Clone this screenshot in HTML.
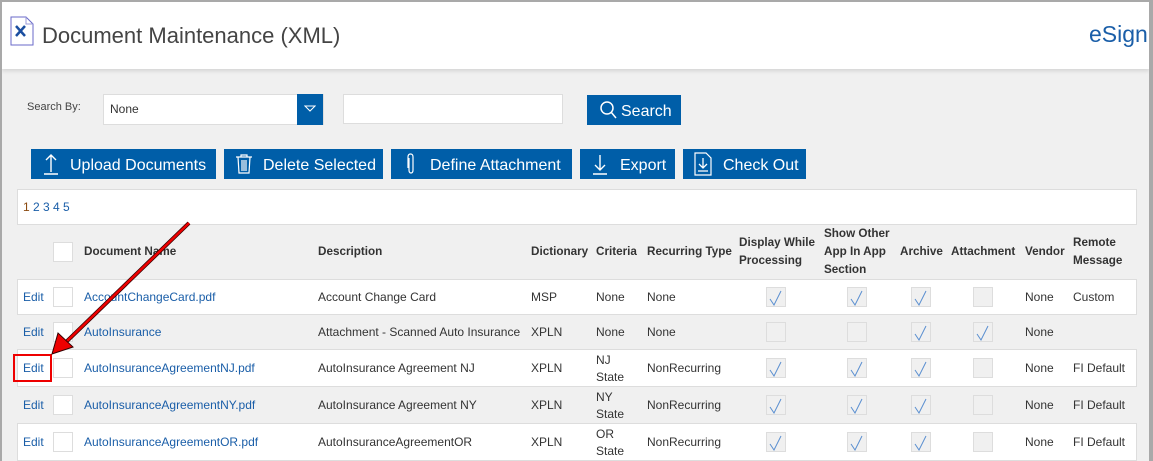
<!DOCTYPE html>
<html><head><meta charset="utf-8"><style>
*{margin:0;padding:0;box-sizing:border-box}
body{width:1153px;height:461px;overflow:hidden;background:#a9a9a9;font-family:"Liberation Sans",sans-serif;position:relative}
#main{position:absolute;left:2px;top:2px;width:1147px;height:459px;background:#f0f0f0;overflow:hidden}
#hdr{position:absolute;left:0;top:0;width:1147px;height:67px;background:#fff;box-shadow:0 2px 4px rgba(0,0,0,.12)}
.a{position:absolute;white-space:nowrap}
.btn{position:absolute;background:#005ea8;color:#fff;font-size:16px;height:30px;line-height:34px}
.btn svg{position:absolute}
.t{font-size:12px;color:#333}
.h{font-size:11.7px;font-weight:bold;color:#333;line-height:18px}
.l{color:#1a5ea8}
.cb{position:absolute;width:20px;height:20px;background:#fff;border:1px solid #ddd}
.row{position:absolute;left:15px;width:1120px;border-top:1px solid #ddd}
</style></head><body>
<div id="main">
<div id="hdr">
<svg class="a" style="left:8px;top:14px" width="24" height="30" viewBox="0 0 24 30"><path d="M1 1H16L23 8V29H1Z" fill="#fff" stroke="#6a6ac8" stroke-width="1"/><path d="M16 1V8H23" fill="none" stroke="#9a9ad8"/><path d="M6 10L15 20M15 10L6 20" stroke="#1a4ea0" stroke-width="2.5"/></svg>
<div class="a" style="left:40px;top:21px;font-size:22px;color:#444">Document Maintenance (XML)</div>
<div class="a" style="left:1087px;top:19px;font-size:23px;color:#1a5ea8">eSign</div>
</div>
<div class="a" style="left:25px;top:99px;font-size:11px;color:#444">Search By:</div>
<div class="a" style="left:101px;top:92px;width:221px;height:31px;background:#fff;border:1px solid #ddd"></div>
<div class="a" style="left:108px;top:100px;font-size:12px;color:#333">None</div>
<div class="a" style="left:295px;top:92px;width:26px;height:31px;background:#005ea8"></div>
<svg class="a" style="left:302px;top:103px" width="12" height="8"><path d="M1 1H11L6 6Z" fill="none" stroke="#fff"/></svg>
<div class="a" style="left:341px;top:92px;width:220px;height:30px;background:#fff;border:1px solid #ddd"></div>
<div class="btn" style="left:585px;top:93px;width:94px"><svg style="left:12px;top:5px" width="18" height="20"><circle cx="8" cy="8" r="6" fill="none" stroke="#fff" stroke-width="1.5"/><path d="M12 12L17 18" stroke="#fff" stroke-width="1.5"/></svg><span style="position:absolute;left:34px">Search</span></div>
<div class="btn" style="left:29px;top:147px;width:185px"><svg style="left:12px;top:4px" width="16" height="22"><path d="M8 2V19M3 7L8 2L13 7M1 21H15" fill="none" stroke="#fff" stroke-width="1.4"/></svg><span style="position:absolute;left:39px">Upload Documents</span></div>
<div class="btn" style="left:222px;top:147px;width:159px"><svg style="left:10px;top:4px" width="20" height="22"><path d="M2 4H18M7 4V2H13V4M4 4L5 20H15L16 4M8 7V18M10 7V18M12 7V18" fill="none" stroke="#fff" stroke-width="1.2"/></svg><span style="position:absolute;left:39px">Delete Selected</span></div>
<div class="btn" style="left:389px;top:147px;width:181px"><svg style="left:14px;top:4px" width="12" height="22"><path d="M4 5V17Q4 20 6 20Q8 20 8 17V4Q8 1 5.5 1Q3 1 3 4V15" fill="none" stroke="#fff" stroke-width="1.2"/></svg><span style="position:absolute;left:39px">Define Attachment</span></div>
<div class="btn" style="left:578px;top:147px;width:95px"><svg style="left:12px;top:4px" width="16" height="22"><path d="M8 2V17M3 12L8 17L13 12M1 21H15" fill="none" stroke="#fff" stroke-width="1.4"/></svg><span style="position:absolute;left:40px">Export</span></div>
<div class="btn" style="left:681px;top:147px;width:123px"><svg style="left:11px;top:3px" width="18" height="24"><path d="M1 1H12L17 6V23H1Z" fill="none" stroke="#fff" stroke-width="1.2"/><path d="M9 6V16M5 12L9 16L13 12M4 19H14" fill="none" stroke="#fff" stroke-width="1.3"/></svg><span style="position:absolute;left:40px">Check Out</span></div>

<div class="a" style="left:15px;top:187px;width:1120px;height:272px;background:#fff;border:1px solid #ddd"></div>
<div class="a t" style="left:21px;top:198px"><span style="color:#8a4a10">1</span> <span class="l">2 3 4 5</span></div>
<div class="row" style="top:222px;height:55px;background:#f0f0f0"></div>
<div class="row" style="top:312px;height:35px;background:#f0f0f0"></div>
<div class="row" style="top:384px;height:37px;background:#f0f0f0"></div>
<div class="row" style="top:277px;height:1px"></div>
<div class="row" style="top:347px;height:1px"></div>
<div class="row" style="top:421px;height:1px"></div>

<div class="cb" style="left:51px;top:240px"></div>
<div class="a h" style="left:82px;top:241px">Document Name</div>
<div class="a h" style="left:316px;top:241px">Description</div>
<div class="a h" style="left:529px;top:241px">Dictionary</div>
<div class="a h" style="left:594px;top:241px">Criteria</div>
<div class="a h" style="left:645px;top:241px">Recurring Type</div>
<div class="a h" style="left:737px;top:232px">Display While<br>Processing</div>
<div class="a h" style="left:822px;top:223px">Show Other<br>App In App<br>Section</div>
<div class="a h" style="left:898px;top:241px">Archive</div>
<div class="a h" style="left:949px;top:241px">Attachment</div>
<div class="a h" style="left:1023px;top:241px">Vendor</div>
<div class="a h" style="left:1071px;top:232px">Remote<br>Message</div>

<div class="a t l" style="left:21px;top:288px">Edit</div><div class="cb" style="left:51px;top:285px"></div>
<div class="a t l" style="left:82px;top:288px">AccountChangeCard.pdf</div><div class="a t" style="left:316px;top:288px">Account Change Card</div><div class="a t" style="left:529px;top:288px">MSP</div><div class="a t" style="left:594px;top:288px">None</div><div class="a t" style="left:645px;top:288px">None</div><div class="a t" style="left:1023px;top:288px">None</div><div class="a t" style="left:1071px;top:288px">Custom</div>

<div class="a t l" style="left:21px;top:323px">Edit</div><div class="cb" style="left:51px;top:320px"></div>
<div class="a t l" style="left:82px;top:323px">AutoInsurance</div><div class="a t" style="left:316px;top:323px">Attachment - Scanned Auto Insurance</div><div class="a t" style="left:529px;top:323px">XPLN</div><div class="a t" style="left:594px;top:323px">None</div><div class="a t" style="left:645px;top:323px">None</div><div class="a t" style="left:1023px;top:323px">None</div>

<div class="a t l" style="left:21px;top:359px">Edit</div><div class="cb" style="left:51px;top:356px"></div>
<div class="a t l" style="left:82px;top:359px">AutoInsuranceAgreementNJ.pdf</div><div class="a t" style="left:316px;top:359px">AutoInsurance Agreement NJ</div><div class="a t" style="left:529px;top:359px">XPLN</div><div class="a t" style="left:594px;top:350px;line-height:17px">NJ<br>State</div><div class="a t" style="left:645px;top:359px">NonRecurring</div><div class="a t" style="left:1023px;top:359px">None</div><div class="a t" style="left:1071px;top:359px">FI Default</div>

<div class="a t l" style="left:21px;top:396px">Edit</div><div class="cb" style="left:51px;top:393px"></div>
<div class="a t l" style="left:82px;top:396px">AutoInsuranceAgreementNY.pdf</div><div class="a t" style="left:316px;top:396px">AutoInsurance Agreement NY</div><div class="a t" style="left:529px;top:396px">XPLN</div><div class="a t" style="left:594px;top:387px;line-height:17px">NY<br>State</div><div class="a t" style="left:645px;top:396px">NonRecurring</div><div class="a t" style="left:1023px;top:396px">None</div><div class="a t" style="left:1071px;top:396px">FI Default</div>

<div class="a t l" style="left:21px;top:433px">Edit</div><div class="cb" style="left:51px;top:430px"></div>
<div class="a t l" style="left:82px;top:433px">AutoInsuranceAgreementOR.pdf</div><div class="a t" style="left:316px;top:433px">AutoInsuranceAgreementOR</div><div class="a t" style="left:529px;top:433px">XPLN</div><div class="a t" style="left:594px;top:424px;line-height:17px">OR<br>State</div><div class="a t" style="left:645px;top:433px">NonRecurring</div><div class="a t" style="left:1023px;top:433px">None</div><div class="a t" style="left:1071px;top:433px">FI Default</div>

<svg class="a" style="left:0;top:0" width="1147" height="459">
<defs><g id="c"><rect x="0.5" y="0.5" width="19" height="19" fill="#f0f0f0" stroke="#ddd"/></g><g id="k"><use href="#c"/><path d="M4 12L8 18L15 4" fill="none" stroke="#5a8fd0" stroke-width="1"/></g></defs>
<use href="#k" x="764" y="285"/><use href="#k" x="845" y="285"/><use href="#k" x="909" y="285"/><use href="#c" x="971" y="285"/>
<use href="#c" x="764" y="320"/><use href="#c" x="845" y="320"/><use href="#k" x="909" y="320"/><use href="#k" x="971" y="320"/>
<use href="#k" x="764" y="356"/><use href="#k" x="845" y="356"/><use href="#k" x="909" y="356"/><use href="#c" x="971" y="356"/>
<use href="#k" x="764" y="393"/><use href="#k" x="845" y="393"/><use href="#k" x="909" y="393"/><use href="#c" x="971" y="393"/>
<use href="#k" x="764" y="430"/><use href="#k" x="845" y="430"/><use href="#k" x="909" y="430"/><use href="#c" x="971" y="430"/>
<rect x="12" y="353" width="37" height="26" fill="none" stroke="#e00" stroke-width="2"/>
<line x1="187" y1="221" x2="62" y2="342" stroke="#300" stroke-width="4"/>
<line x1="187" y1="221" x2="62" y2="342" stroke="#e00" stroke-width="2.5"/>
<path d="M50 352L56 331L71 345Z" fill="#e00" stroke="#300" stroke-width="1"/>
</svg>
</div>
</body></html>
